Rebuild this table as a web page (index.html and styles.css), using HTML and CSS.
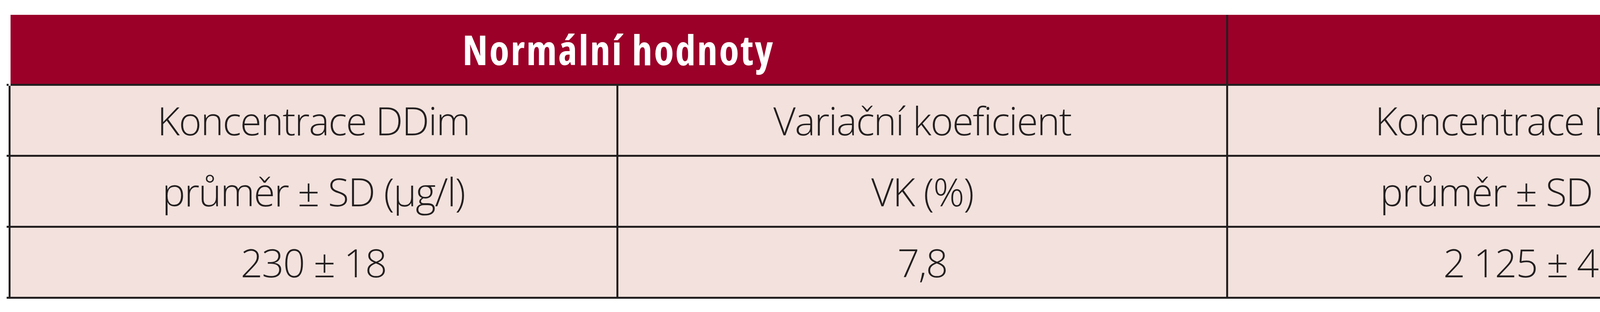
FILE: index.html
```html
<!DOCTYPE html>
<html lang="cs">
<head>
<meta charset="utf-8">
<title>Tabulka DDim</title>
<link rel="stylesheet" href="styles.css">
</head>
<body>
<div class="page">
  <div class="table" role="table">
    <div class="th th-first" role="columnheader">Normální hodnoty</div>
    <div class="th" role="columnheader">Patologické hodnoty</div>

    <div class="td c1 r1" role="cell">Koncentrace DDim</div>
    <div class="td" role="cell">Variační koeficient</div>
    <div class="td" role="cell">Koncentrace DDim</div>
    <div class="td" role="cell">Variační koeficient</div>

    <div class="td c1" role="cell">průměr ± SD (μg/l)</div>
    <div class="td" role="cell">VK (%)</div>
    <div class="td" role="cell">průměr ± SD (μg/l)</div>
    <div class="td" role="cell">VK (%)</div>

    <div class="td c1" role="cell">230 ± 18</div>
    <div class="td" role="cell">7,8</div>
    <div class="td" role="cell">2&nbsp;125 ± 46</div>
    <div class="td" role="cell">2,2</div>
  </div>
</div>
</body>
</html>
```

FILE: styles.css
```css
html, body {
  margin: 0;
  padding: 0;
  background: #ffffff;
}

.page {
  padding: 38px 0 0 22px;
}

.table {
  display: grid;
  grid-template-columns: 1561px 1561px 1557px 1561px;
  grid-auto-rows: 182px;
  width: 6240px;
  font-family: "Open Sans", "Liberation Sans", sans-serif;
  color: #231f20;
}

.th {
  grid-column: span 2;
  box-sizing: border-box;
  background: #9b0029;
  color: #ffffff;
  font-weight: 700;
  font-stretch: 75%;
  font-size: 105px;
  letter-spacing: 3.5px;
  display: flex;
  align-items: center;
  justify-content: center;
  border-right: 5px solid #231f20;
  border-bottom: 5px solid #231f20;
}

.th-first {
  margin-left: 5px;
}

.td {
  box-sizing: border-box;
  position: relative;
  background: #f2e1dc;
  font-weight: 300;
  font-size: 99px;
  letter-spacing: -2.2px;
  display: flex;
  align-items: center;
  justify-content: center;
  border-right: 5px solid #231f20;
  border-bottom: 5px solid #231f20;
  white-space: nowrap;
}

.c1 {
  border-left: 5px solid #231f20;
}

/* small ticks where the horizontal rules overshoot the left border */
.c1::after,
.r1::before {
  content: "";
  position: absolute;
  left: -10px;
  width: 5px;
  height: 5px;
  background: #231f20;
}

.c1::after {
  bottom: -5px;
}

.r1::before {
  top: -5px;
}
```
